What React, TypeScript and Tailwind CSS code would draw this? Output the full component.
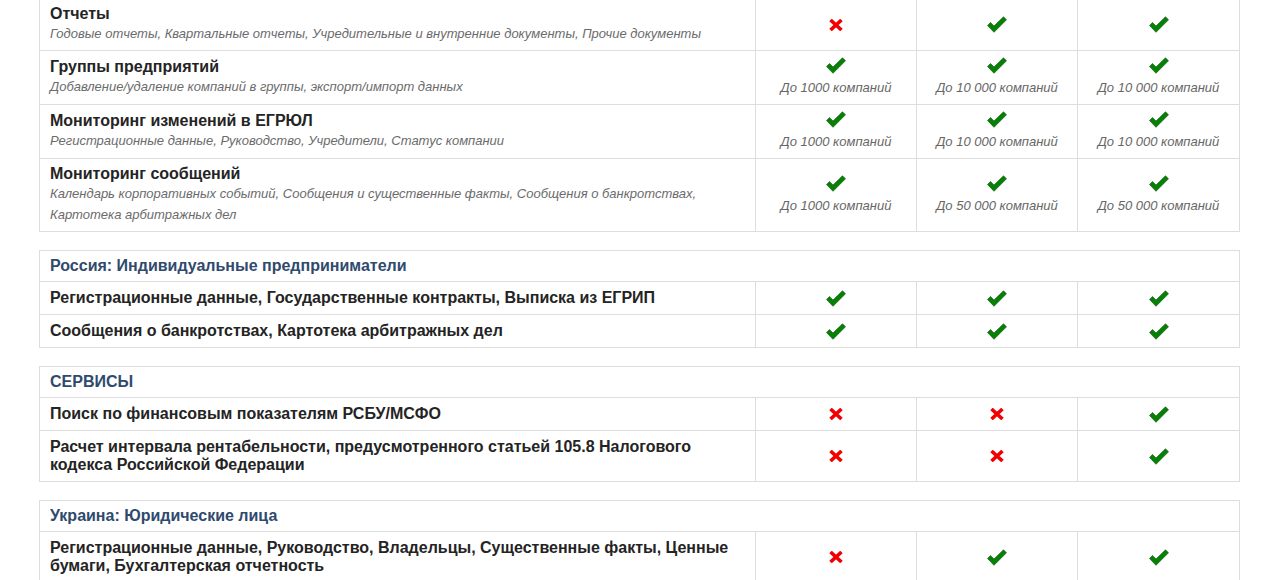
type Mark = 'yes' | 'no';
type Cell = { mark: Mark; note?: string };

type Row = {
  title: string;
  desc?: string;
  cells: Cell[];
};

type Section = {
  heading?: string;
  rows: Row[];
};

const y = (note?: string): Cell => ({ mark: 'yes', note });
const n = (): Cell => ({ mark: 'no' });

const sections: Section[] = [
  {
    rows: [
      {
        title: 'Отчеты',
        desc: 'Годовые отчеты, Квартальные отчеты, Учредительные и внутренние документы, Прочие документы',
        cells: [n(), y(), y()],
      },
      {
        title: 'Группы предприятий',
        desc: 'Добавление/удаление компаний в группы, экспорт/импорт данных',
        cells: [y('До 1000 компаний'), y('До 10 000 компаний'), y('До 10 000 компаний')],
      },
      {
        title: 'Мониторинг изменений в ЕГРЮЛ',
        desc: 'Регистрационные данные, Руководство, Учредители, Статус компании',
        cells: [y('До 1000 компаний'), y('До 10 000 компаний'), y('До 10 000 компаний')],
      },
      {
        title: 'Мониторинг сообщений',
        desc: 'Календарь корпоративных событий, Сообщения и существенные факты, Сообщения о банкротствах, Картотека арбитражных дел',
        cells: [y('До 1000 компаний'), y('До 50 000 компаний'), y('До 50 000 компаний')],
      },
    ],
  },
  {
    heading: 'Россия: Индивидуальные предприниматели',
    rows: [
      {
        title: 'Регистрационные данные, Государственные контракты, Выписка из ЕГРИП',
        cells: [y(), y(), y()],
      },
      {
        title: 'Сообщения о банкротствах, Картотека арбитражных дел',
        cells: [y(), y(), y()],
      },
    ],
  },
  {
    heading: 'СЕРВИСЫ',
    rows: [
      {
        title: 'Поиск по финансовым показателям РСБУ/МСФО',
        cells: [n(), n(), y()],
      },
      {
        title: 'Расчет интервала рентабельности, предусмотренного статьей 105.8 Налогового кодекса Российской Федерации',
        cells: [n(), n(), y()],
      },
    ],
  },
  {
    heading: 'Украина: Юридические лица',
    rows: [
      {
        title: 'Регистрационные данные, Руководство, Владельцы, Существенные факты, Ценные бумаги, Бухгалтерская отчетность',
        cells: [n(), y(), y()],
      },
    ],
  },
];

function CheckIcon() {
  return (
    <svg width="20" height="17" viewBox="0 0 20 17" className="block">
      <polygon
        points="0.5,9.5 3.5,6.5 7,10 16.5,0.8 19.5,3.8 7,16.3"
        fill="#058205"
        stroke="#0b4f0b"
        strokeWidth="0.6"
        strokeLinejoin="miter"
      />
    </svg>
  );
}

function CrossIcon() {
  return (
    <svg width="14" height="12" viewBox="0 0 14 12" className="block">
      <path d="M1.5 1 L12.5 11 M12.5 1 L1.5 11" stroke="#f20000" strokeWidth="3.6" strokeLinecap="butt" />
    </svg>
  );
}

function MarkCell({ cell }: { cell: Cell }) {
  return (
    <td className="border border-[#dddddd] px-[10px] py-[6px] align-middle text-center">
      <div className="flex flex-col items-center">
        <div className="flex h-[17px] items-center justify-center">
          {cell.mark === 'yes' ? <CheckIcon /> : <CrossIcon />}
        </div>
        {cell.note && (
          <div className="mt-[4px] text-[13px] leading-[20px] italic text-[#666666]">{cell.note}</div>
        )}
      </div>
    </td>
  );
}

function SectionTable({ section, last }: { section: Section; last: boolean }) {
  return (
    <table className={`w-[1200px] table-fixed border-collapse ${last ? '' : 'mb-[18px]'}`}>
      <colgroup>
        <col className="w-[716px]" />
        <col className="w-[161px]" />
        <col className="w-[161px]" />
        <col className="w-[162px]" />
      </colgroup>
      <tbody>
        {section.heading && (
          <tr>
            <td
              colSpan={4}
              className="border border-[#dddddd] px-[10px] py-[6px] text-[16px] leading-[18px] font-bold text-[#2f4a6d]"
            >
              {section.heading}
            </td>
          </tr>
        )}
        {section.rows.map((row) => (
          <tr key={row.title}>
            <td
              className={`border border-[#dddddd] px-[10px] align-middle ${row.desc ? 'py-[6px]' : 'py-[7px]'}`}
            >
              <div className="text-[16px] leading-[18px] font-bold text-[#242424]">{row.title}</div>
              {row.desc && (
                <div className="text-[13px] leading-[21px] italic text-[#6b6b6b]">{row.desc}</div>
              )}
            </td>
            {row.cells.map((cell, i) => (
              <MarkCell key={i} cell={cell} />
            ))}
          </tr>
        ))}
      </tbody>
    </table>
  );
}

export default function App() {
  return (
    <div
      className="mt-[-2px] h-[582px] overflow-hidden bg-white pl-[39px]"
      style={{ fontFamily: '"Liberation Sans", Arial, sans-serif' }}
    >
      {sections.map((section, i) => (
        <SectionTable key={i} section={section} last={i === sections.length - 1} />
      ))}
    </div>
  );
}
